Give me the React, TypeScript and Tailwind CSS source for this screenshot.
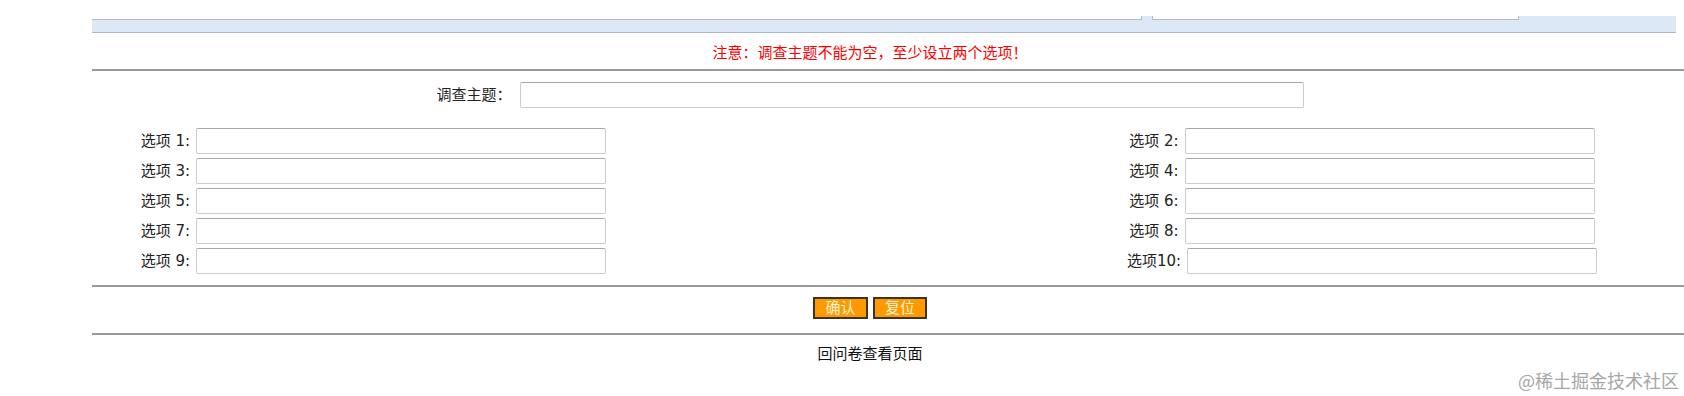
import React from 'react';

const font = { fontFamily: '"DejaVu Sans", "Noto Sans CJK SC", sans-serif' };

function Field({ className }: { className: string }) {
  return (
    <input
      type="text"
      className={`h-[26px] rounded-[2px] border border-[#cccccc] border-t-[#a9a9a9] bg-white outline-none ${className}`}
    />
  );
}

function OptionCell({ n }: { n: number }) {
  const label = n < 10 ? `选项 ${n}:` : `选项${n}:`;
  return (
    <div className="flex items-center justify-center">
      <span className="text-[15px] leading-[20px] text-[#222]">{label}</span>
      <Field className="ml-[6px] w-[410px]" />
    </div>
  );
}

const rows = [
  [1, 2],
  [3, 4],
  [5, 6],
  [7, 8],
  [9, 10],
];

export default function App() {
  return (
    <div className="relative h-[396px] w-[1684px] overflow-hidden bg-white" style={font}>
      {/* top tab strip */}
      <div className="h-[16px]" />
      <div className="ml-[92px] h-[17px] w-[1584px] border-b border-[#a9b7c9] bg-[#dde8f7]">
        <div className="flex">
          <div className="h-[4px] w-[1050px] border-b border-r border-[#b4bcc6] bg-white" />
          <div className="ml-[10px] h-[4px] w-[367px] border-b border-l border-r border-[#b4bcc6] bg-white" />
        </div>
      </div>

      <div className="ml-[92px] w-[1592px]">
        {/* notice */}
        <div className="flex h-[36px] w-[1556px] items-center justify-center pt-[4px]">
          <span className="text-[15px] text-[#ff0000]">注意：调查主题不能为空，至少设立两个选项！</span>
        </div>
        <div className="h-[2px] bg-[#999999]" />

        {/* subject */}
        <div className="mt-[11px] flex w-[1556px] items-center justify-center">
          <span className="text-[15px] leading-[20px] text-[#222]">调查主题：</span>
          <Field className="ml-[8px] w-[784px]" />
        </div>

        {/* options */}
        <div className="mt-[20px] flex flex-col gap-[4px]">
          {rows.map(([a, b]) => (
            <div key={a} className="grid grid-cols-[563px_385px_644px]">
              <OptionCell n={a} />
              <div />
              <OptionCell n={b} />
            </div>
          ))}
        </div>

        <div className="mt-[11px] h-[2px] bg-[#999999]" />

        {/* buttons */}
        <div className="mt-[10px] flex w-[1556px] justify-center gap-[5px]">
          <button className="h-[22px] w-[55px] border-2 border-[#3b3320] bg-[#ff9900] text-[15px] leading-[18px] text-[#fff6d5]">
            确认
          </button>
          <button className="h-[22px] w-[54px] border-2 border-[#3b3320] bg-[#ff9900] text-[15px] leading-[18px] text-[#fff6d5]">
            复位
          </button>
        </div>

        <div className="mt-[14px] h-[2px] bg-[#999999]" />

        <div className="flex w-[1556px] justify-center pt-[9px]">
          <span className="text-[15px] leading-[20px] text-[#111]">回问卷查看页面</span>
        </div>
      </div>

      {/* watermark */}
      <div
        className="absolute bottom-[4px] right-[5px] text-[18px] leading-[24px] text-[#a6a6a6]"
        style={{ fontFamily: '"Noto Sans CJK SC", sans-serif' }}
      >
        @稀土掘金技术社区
      </div>
    </div>
  );
}
